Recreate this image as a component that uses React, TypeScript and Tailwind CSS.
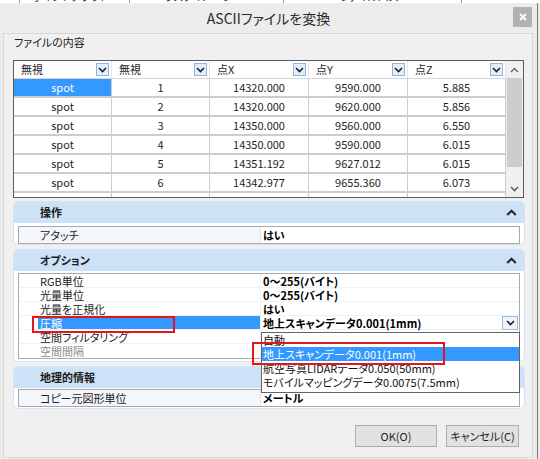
import React from "react";

const FONT = "font-['Noto_Sans_CJK_JP','Noto_Sans',sans-serif] [font-feature-settings:'palt']";

const columns = [
  { w: "w-[98px]", head: "無視", drop: true },
  { w: "w-[98px]", head: "無視", drop: true },
  { w: "w-[99px]", head: "点X", drop: true },
  { w: "w-[99px]", head: "点Y", drop: true },
  { w: "w-[98px]", head: "点Z", drop: true },
];

const rows = [
  ["spot", "1", "14320.000", "9590.000", "5.885"],
  ["spot", "2", "14320.000", "9620.000", "5.856"],
  ["spot", "3", "14350.000", "9560.000", "6.550"],
  ["spot", "4", "14350.000", "9590.000", "6.015"],
  ["spot", "5", "14351.192", "9627.012", "6.015"],
  ["spot", "6", "14342.977", "9655.360", "6.073"],
];

function ChevronDown({ color = "#222" }: { color?: string }) {
  return (
    <svg width="9" height="6" viewBox="0 0 9 6">
      <path d="M1 1l3.5 3.5L8 1" stroke={color} strokeWidth="1.6" fill="none" />
    </svg>
  );
}

function ChevronUp() {
  return (
    <svg width="11" height="7" viewBox="0 0 11 7">
      <path d="M1.2 6L5.5 1.8 9.8 6" stroke="#2b2b2b" strokeWidth="2.2" fill="none" />
    </svg>
  );
}

function DropButton() {
  return (
    <div className="w-[13px] h-[13px] border border-[#8db6e4] bg-[#e2eefb] flex items-center justify-center">
      <ChevronDown />
    </div>
  );
}

function Section({ title, children }: { title: string; children: React.ReactNode }) {
  return (
    <div className="rounded-[5px] border border-[#d3e4f7] bg-white overflow-hidden">
      <div className="h-[21px] bg-[#cde1f7] flex items-center justify-between pl-[26px] pr-[7px]">
        <span className="text-[11px] font-bold text-[#1c1c1c]">{title}</span>
        <ChevronUp />
      </div>
      {children}
    </div>
  );
}

function PropRow({ label, value }: { label: string; value: string }) {
  return (
    <div className="mx-[4px] h-[18px] border border-[#a9a9a9] flex text-[11px] leading-[16px]">
      <div className="w-[241px] bg-[#f3f6fa] pl-[21px] text-[#222]">{label}</div>
      <div className="flex-1 border-l border-[#e3e3e3] pl-[2px] font-bold text-black">{value}</div>
    </div>
  );
}

const options = [
  { label: "RGB単位", value: "0～255(バイト)" },
  { label: "光量単位", value: "0～255(バイト)" },
  { label: "光量を正規化", value: "はい" },
  { label: "圧縮", value: "地上スキャンデータ0.001(1mm)", selected: true },
  { label: "空間フィルタリング", value: "" },
  { label: "空間間隔", value: "", disabled: true },
];

export default function App() {
  return (
    <div className={`w-[540px] h-[459px] bg-white overflow-hidden relative ${FONT}`}>
      {/* window behind the dialog */}
      <div className="h-[3px] bg-white overflow-hidden flex text-[11px] leading-[14px] text-[#333]">
        <div className="w-[20px] border-r border-[#9a9a9a]" />
        <div className="w-[110px] border-r border-[#9a9a9a] -mt-[11px] pl-[12px]">ポイントクラウド</div>
        <div className="w-[154px] border-r border-[#9a9a9a] -mt-[11px] pl-[34px]">ラスタイメージ</div>
        <div className="w-[178px] border-r border-[#9a9a9a] -mt-[11px] pl-[56px]">ファイルパス</div>
        <div className="flex-1" />
      </div>

      <div className="flex">
        <div className="w-[538px] h-[456px] bg-[#ececec] border-r border-[#7c7c7c] flex flex-col">
          {/* title bar */}
          <div className="h-[30px] relative flex items-center justify-center">
            <span className="text-[14px] text-[#2a2a2a]">ASCIIファイルを変換</span>
            <div className="absolute right-[5px] top-[4px] w-[19px] h-[20px] bg-[#b2b2b2] flex items-center justify-center">
              <svg width="8" height="8" viewBox="0 0 8 8">
                <path d="M1 1l6 6M7 1L1 7" stroke="#fff" strokeWidth="1.8" />
              </svg>
            </div>
          </div>

          {/* content panel */}
          <div className="ml-[3px] w-[530px] h-[425px] border border-[#d8d8d8] bg-[#f0f0f0] flex flex-col">
            <div className="h-[26px] pl-[10px] text-[11px] leading-[16px] text-[#222]">ファイルの内容</div>

            {/* table */}
            <div className="ml-[9px] w-[511px] h-[138px] border border-[#5c5c5c] bg-white flex text-[11px] text-[#1e1e1e]">
              <div className="w-[492px] flex flex-col overflow-hidden">
                <div className="h-[18px] shrink-0 flex border-b border-[#d4d4d4]">
                  {columns.map((c, i) => (
                    <div key={i} className={`${c.w} flex items-center justify-between pl-[7px] pr-[2px] border-r border-[#e6e6e6]`}>
                      <span>{c.head}</span>
                      {c.drop && <DropButton />}
                    </div>
                  ))}
                </div>
                {rows.map((r, ri) => (
                  <div key={ri} className="h-[19px] shrink-0 flex border-b-2 border-[#cdcdcd]">
                    {r.map((v, ci) => (
                      <div
                        key={ci}
                        className={`${columns[ci].w} flex items-center justify-center border-r border-[#cdcdcd] ${
                          ri === 0 && ci === 0 ? "bg-[#3399ff] text-white" : ""
                        }`}
                      >
                        {v}
                      </div>
                    ))}
                  </div>
                ))}
                <div className="h-[19px] shrink-0 flex">
                  {columns.map((c, i) => (
                    <div key={i} className={`${c.w} border-r border-[#cdcdcd]`} />
                  ))}
                </div>
              </div>
              {/* scrollbar */}
              <div className="w-[17px] bg-[#f0f0f0] flex flex-col">
                <div className="h-[17px] flex items-center justify-center">
                  <svg width="9" height="6" viewBox="0 0 9 6">
                    <path d="M1 5l3.5-3.5L8 5" stroke="#606060" strokeWidth="1.3" fill="none" />
                  </svg>
                </div>
                <div className="h-[89px] mx-[1px] bg-[#cdcdcd]" />
                <div className="flex-1" />
                <div className="h-[17px] flex items-center justify-center">
                  <ChevronDown color="#606060" />
                </div>
              </div>
            </div>

            {/* property sections */}
            <div className="ml-[9px] w-[512px] mt-[3px] flex flex-col gap-[4px]">
              <Section title="操作">
                <div className="pt-[3px]">
                  <PropRow label="アタッチ" value="はい" />
                </div>
              </Section>

              <Section title="オプション">
                <div className="pt-[2px] pb-[2px]">
                  <div className="mx-[4px] h-[86px] border border-[#a9a9a9] flex flex-col text-[11px] leading-[14px]">
                    {options.map((o, i) => (
                      <div key={i} className="h-[14px] flex border-b border-[#f1f1f1] last:border-b-0">
                        <div className="w-[19px]" />
                        <div
                          className={`w-[222px] pl-[2px] ${
                            o.selected ? "bg-[#3399ff] text-white" : o.disabled ? "text-[#8c8c8c]" : "text-[#222]"
                          }`}
                        >
                          {o.label}
                        </div>
                        <div className="flex-1 border-l border-[#f1f1f1] pl-[2px] pr-[1px] flex items-center justify-between font-bold text-black">
                          <span>{o.value}</span>
                          {o.selected && (
                            <div className="w-[16px] h-[14px] border border-[#9fbfe2] bg-[#eef5fc] flex items-center justify-center">
                              <ChevronDown />
                            </div>
                          )}
                        </div>
                      </div>
                    ))}
                  </div>
                </div>
              </Section>

              <Section title="地理的情報">
                <div className="pt-[1px] pb-[1px]">
                  <PropRow label="コピー元図形単位" value="メートル" />
                </div>
              </Section>
            </div>

            {/* buttons */}
            <div className="mt-[16px] ml-[9px] w-[506px] flex justify-end gap-[9px] text-[11px] text-[#1e1e1e]">
              <div className="w-[82px] h-[22px] bg-[#e1e1e1] border border-[#adadad] flex items-center justify-center">
                OK(O)
              </div>
              <div className="w-[73px] h-[22px] bg-[#e1e1e1] border border-[#adadad] flex items-center justify-center">
                キャンセル(C)
              </div>
            </div>
          </div>
        </div>
        <div className="flex-1 bg-[#ebebeb]" />
      </div>

      {/* open dropdown list of 圧縮 */}
      <div className="absolute left-[261px] top-[332px] w-[259px] h-[61px] border border-[#646464] bg-white text-[11px] leading-[14px] text-[#111]">
        <div className="h-[14px] pl-[1px]">自動</div>
        <div className="h-[14px] pl-[1px] bg-[#3399ff] text-white">地上スキャンデータ0.001(1mm)</div>
        <div className="h-[14px] pl-[1px]">航空写真LIDARデータ0.050(50mm)</div>
        <div className="h-[14px] pl-[1px]">モバイルマッピングデータ0.0075(7.5mm)</div>
      </div>

      {/* red highlight boxes */}
      <div className="absolute left-[32px] top-[316px] w-[143px] h-[17px] border-2 border-[#e3161d]" />
      <div className="absolute left-[252px] top-[342px] w-[193px] h-[23px] border-2 border-[#e3161d]" />
    </div>
  );
}
